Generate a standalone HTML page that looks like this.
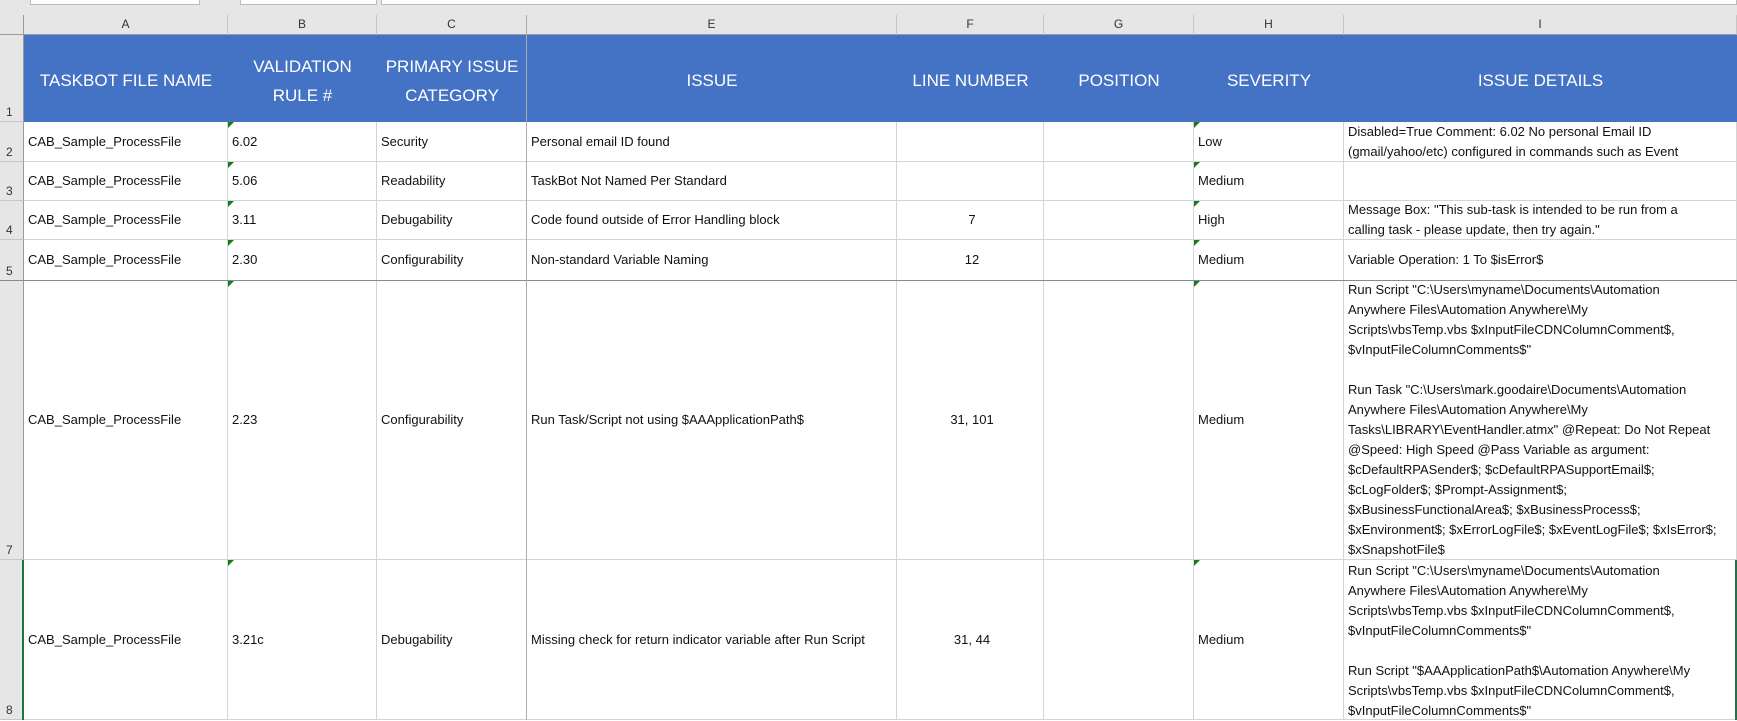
<!DOCTYPE html>
<html><head><style>
*{margin:0;padding:0;box-sizing:border-box}
body{width:1737px;height:720px;overflow:hidden;background:#fff;font-family:"Liberation Sans",sans-serif;position:relative}
.a{position:absolute}
.top{left:0;top:0;width:1737px;height:15px;background:#e6e6e6}
.ch{top:15px;height:20px;background:#e6e6e6;border-right:1px solid #c6c6c6;border-bottom:1px solid #9b9b9b;font-size:12px;color:#333;text-align:center;line-height:19px}
.rh{left:0;width:24px;background:#e6e6e6;border-bottom:1px solid #c6c6c6;border-right:1px solid #9b9b9b;font-size:12px;color:#333;padding-left:6px;display:flex;align-items:flex-end;padding-bottom:2px}
.hdr{left:24px;top:35px;width:1713px;height:87px;background:#4472c4}
.ht{top:37px;height:87px;color:#fff;font-size:17px;display:flex;align-items:center;justify-content:center;text-align:center;line-height:29px}
.c{font-size:13px;color:#111;white-space:nowrap;display:flex;align-items:center;padding-left:4px;line-height:20px;border-right:1px solid #d4d4d4;border-bottom:1px solid #d4d4d4}
.tri{width:0;height:0;border-top:6px solid #1a7a1a;border-right:6px solid transparent;position:absolute;left:0;top:0}
</style></head><body>
<div class="a top"></div>
<div class="a" style="left:30px;top:0;width:170px;height:5px;border:1px solid #bbb;border-top:none;background:#fff"></div>
<div class="a" style="left:240px;top:0;width:137px;height:5px;border:1px solid #bbb;border-top:none;background:#fff"></div>
<div class="a" style="left:381px;top:0;width:1356px;height:5px;border:1px solid #bbb;border-top:none;background:#fff"></div>
<div class="a ch" style="left:0;width:24px;border-right:1px solid #9b9b9b"></div>
<div class="a ch" style="left:24px;width:204px">A</div>
<div class="a ch" style="left:228px;width:149px">B</div>
<div class="a ch" style="left:377px;width:150px">C</div>
<div class="a ch" style="left:527px;width:370px">E</div>
<div class="a ch" style="left:897px;width:147px">F</div>
<div class="a ch" style="left:1044px;width:150px">G</div>
<div class="a ch" style="left:1194px;width:150px">H</div>
<div class="a ch" style="left:1344px;width:393px">I</div>

<div class="a rh" style="top:35px;height:87px">1</div>
<div class="a rh" style="top:122px;height:40px">2</div>
<div class="a rh" style="top:162px;height:39px">3</div>
<div class="a rh" style="top:201px;height:39px">4</div>
<div class="a rh" style="top:240px;height:41px">5</div>
<div class="a rh" style="top:281px;height:279px">7</div>
<div class="a rh" style="top:560px;height:160px">8</div>

<div class="a hdr"></div>
<div class="a ht" style="left:24px;width:204px">TASKBOT FILE NAME</div>
<div class="a ht" style="left:228px;width:149px">VALIDATION<br>RULE #</div>
<div class="a ht" style="left:377px;width:150px">PRIMARY ISSUE<br>CATEGORY</div>
<div class="a ht" style="left:527px;width:370px">ISSUE</div>
<div class="a ht" style="left:897px;width:147px">LINE NUMBER</div>
<div class="a ht" style="left:1044px;width:150px">POSITION</div>
<div class="a ht" style="left:1194px;width:150px">SEVERITY</div>
<div class="a ht" style="left:1344px;width:393px">ISSUE DETAILS</div>

<!-- row 2 -->
<div class="a c" style="left:24px;top:122px;width:204px;height:40px">CAB_Sample_ProcessFile</div>
<div class="a c" style="left:228px;top:122px;width:149px;height:40px"><i class="tri"></i>6.02</div>
<div class="a c" style="left:377px;top:122px;width:150px;height:40px">Security</div>
<div class="a c" style="left:527px;top:122px;width:370px;height:40px">Personal email ID found</div>
<div class="a c" style="left:897px;top:122px;width:147px;height:40px"></div>
<div class="a c" style="left:1044px;top:122px;width:150px;height:40px"></div>
<div class="a c" style="left:1194px;top:122px;width:150px;height:40px"><i class="tri"></i>Low</div>
<div class="a c" style="left:1344px;top:122px;width:393px;height:40px">Disabled=True Comment: 6.02 No personal Email ID<br>(gmail/yahoo/etc) configured in commands such as Event</div>
<!-- row 3 -->
<div class="a c" style="left:24px;top:162px;width:204px;height:39px">CAB_Sample_ProcessFile</div>
<div class="a c" style="left:228px;top:162px;width:149px;height:39px"><i class="tri"></i>5.06</div>
<div class="a c" style="left:377px;top:162px;width:150px;height:39px">Readability</div>
<div class="a c" style="left:527px;top:162px;width:370px;height:39px">TaskBot Not Named Per Standard</div>
<div class="a c" style="left:897px;top:162px;width:147px;height:39px"></div>
<div class="a c" style="left:1044px;top:162px;width:150px;height:39px"></div>
<div class="a c" style="left:1194px;top:162px;width:150px;height:39px"><i class="tri"></i>Medium</div>
<div class="a c" style="left:1344px;top:162px;width:393px;height:39px"></div>
<!-- row 4 -->
<div class="a c" style="left:24px;top:201px;width:204px;height:39px">CAB_Sample_ProcessFile</div>
<div class="a c" style="left:228px;top:201px;width:149px;height:39px"><i class="tri"></i>3.11</div>
<div class="a c" style="left:377px;top:201px;width:150px;height:39px">Debugability</div>
<div class="a c" style="left:527px;top:201px;width:370px;height:39px">Code found outside of Error Handling block</div>
<div class="a c" style="left:897px;top:201px;width:147px;height:39px;justify-content:center">7</div>
<div class="a c" style="left:1044px;top:201px;width:150px;height:39px"></div>
<div class="a c" style="left:1194px;top:201px;width:150px;height:39px"><i class="tri"></i>High</div>
<div class="a c" style="left:1344px;top:201px;width:393px;height:39px">Message Box: "This sub-task is intended to be run from a<br>calling task - please update, then try again."</div>
<!-- row 5 -->
<div class="a c" style="left:24px;top:240px;width:204px;height:41px">CAB_Sample_ProcessFile</div>
<div class="a c" style="left:228px;top:240px;width:149px;height:41px"><i class="tri"></i>2.30</div>
<div class="a c" style="left:377px;top:240px;width:150px;height:41px">Configurability</div>
<div class="a c" style="left:527px;top:240px;width:370px;height:41px">Non-standard Variable Naming</div>
<div class="a c" style="left:897px;top:240px;width:147px;height:41px;justify-content:center">12</div>
<div class="a c" style="left:1044px;top:240px;width:150px;height:41px"></div>
<div class="a c" style="left:1194px;top:240px;width:150px;height:41px"><i class="tri"></i>Medium</div>
<div class="a c" style="left:1344px;top:240px;width:393px;height:41px">Variable Operation: 1 To $isError$</div>
<!-- row 7 -->
<div class="a c" style="left:24px;top:281px;width:204px;height:279px">CAB_Sample_ProcessFile</div>
<div class="a c" style="left:228px;top:281px;width:149px;height:279px"><i class="tri"></i>2.23</div>
<div class="a c" style="left:377px;top:281px;width:150px;height:279px">Configurability</div>
<div class="a c" style="left:527px;top:281px;width:370px;height:279px">Run Task/Script not using $AAApplicationPath$</div>
<div class="a c" style="left:897px;top:281px;width:147px;height:279px;justify-content:center">31, 101</div>
<div class="a c" style="left:1044px;top:281px;width:150px;height:279px"></div>
<div class="a c" style="left:1194px;top:281px;width:150px;height:279px"><i class="tri"></i>Medium</div>
<div class="a c" style="left:1344px;top:281px;width:393px;height:279px">Run Script "C:\Users\myname\Documents\Automation<br>Anywhere Files\Automation Anywhere\My<br>Scripts\vbsTemp.vbs $xInputFileCDNColumnComment$,<br>$vInputFileColumnComments$"<br><br>Run Task "C:\Users\mark.goodaire\Documents\Automation<br>Anywhere Files\Automation Anywhere\My<br>Tasks\LIBRARY\EventHandler.atmx" @Repeat: Do Not Repeat<br>@Speed: High Speed @Pass Variable as argument:<br>$cDefaultRPASender$; $cDefaultRPASupportEmail$;<br>$cLogFolder$; $Prompt-Assignment$;<br>$xBusinessFunctionalArea$; $xBusinessProcess$;<br>$xEnvironment$; $xErrorLogFile$; $xEventLogFile$; $xIsError$;<br>$xSnapshotFile$</div>
<!-- row 8 -->
<div class="a c" style="left:24px;top:560px;width:204px;height:160px">CAB_Sample_ProcessFile</div>
<div class="a c" style="left:228px;top:560px;width:149px;height:160px"><i class="tri"></i>3.21c</div>
<div class="a c" style="left:377px;top:560px;width:150px;height:160px">Debugability</div>
<div class="a c" style="left:527px;top:560px;width:370px;height:160px">Missing check for return indicator variable after Run Script</div>
<div class="a c" style="left:897px;top:560px;width:147px;height:160px;justify-content:center">31, 44</div>
<div class="a c" style="left:1044px;top:560px;width:150px;height:160px"></div>
<div class="a c" style="left:1194px;top:560px;width:150px;height:160px"><i class="tri"></i>Medium</div>
<div class="a c" style="left:1344px;top:560px;width:393px;height:160px;align-items:flex-start;padding-top:1px">Run Script "C:\Users\myname\Documents\Automation<br>Anywhere Files\Automation Anywhere\My<br>Scripts\vbsTemp.vbs $xInputFileCDNColumnComment$,<br>$vInputFileColumnComments$"<br><br>Run Script "$AAApplicationPath$\Automation Anywhere\My<br>Scripts\vbsTemp.vbs $xInputFileCDNColumnComment$,<br>$vInputFileColumnComments$"</div>
<div class="a" style="left:0;top:280px;width:1737px;height:1px;background:#8a8a8a"></div>
<div class="a" style="left:526px;top:15px;width:1px;height:705px;background:#aaa"></div>
<div class="a" style="left:1735px;top:560px;width:2px;height:160px;background:#217346"></div>
<div class="a" style="left:22px;top:560px;width:2px;height:160px;background:#217346"></div>
</body></html>
